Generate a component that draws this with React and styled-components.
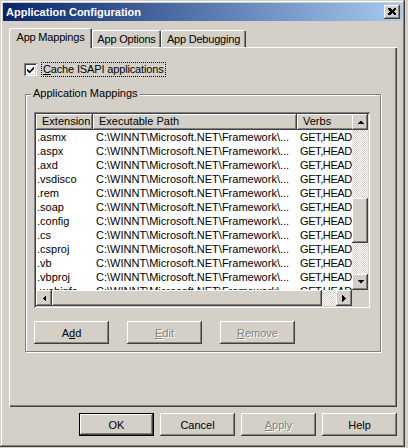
import React from 'react'
import styled, { createGlobalStyle } from 'styled-components'

const GlobalStyle = createGlobalStyle`
  body {
    margin: 0;
    background: #d4d0c8;
    font-family: "Liberation Sans", Arial, sans-serif;
    font-size: 11px;
    color: #000;
  }
  * { box-sizing: border-box; }
`

const raised = `box-shadow: inset -1px -1px #404040, inset 1px 1px #fff, inset -2px -2px #808080, inset 2px 2px #d4d0c8;`
const sunken = `box-shadow: inset 1px 1px #808080, inset -1px -1px #fff, inset 2px 2px #404040, inset -2px -2px #d4d0c8;`

const Window = styled.div`
  width: 405px;
  height: 447px;
  padding: 3px;
  background: #d4d0c8;
  box-shadow: inset -1px -1px #404040, inset 1px 1px #d4d0c8, inset -2px -2px #808080, inset 2px 2px #fff;
  display: flex;
  flex-direction: column;
`

const TitleBar = styled.div`
  height: 18px;
  display: flex;
  align-items: center;
  padding: 0 2px 0 3px;
  background: linear-gradient(to right, #0a246a, #a6caf0);
`

const TitleText = styled.div`
  flex: 1;
  color: #fff;
  font-weight: bold;
  font-size: 11px;
`

const CloseBtn = styled.div`
  width: 16px;
  height: 14px;
  background: #d4d0c8;
  ${raised}
  display: flex;
  align-items: center;
  justify-content: center;
  padding-bottom: 1px;
`

const Body = styled.div`
  padding: 7px 5px 0 6px;
  display: flex;
  flex-direction: column;
`

const TabRow = styled.div`
  height: 19px;
  display: flex;
  align-items: flex-end;
`

const Tab = styled.div`
  width: ${p => p.$w}px;
  height: ${p => (p.$active ? 20 : 17)}px;
  margin-bottom: ${p => (p.$active ? -1 : 0)}px;
  position: relative;
  z-index: ${p => (p.$active ? 2 : 0)};
  background: #d4d0c8;
  border-radius: 2px 2px 0 0;
  box-shadow: inset 1px 1px #fff, inset -1px 0 #404040, inset -2px 0 #808080;
  display: flex;
  align-items: center;
  justify-content: center;
  padding-bottom: ${p => (p.$active ? 2 : 0)}px;
  white-space: nowrap;
  letter-spacing: -0.2px;
`

const Panel = styled.div`
  height: 360px;
  position: relative;
  z-index: 1;
  box-shadow: inset 1px 1px #fff, inset -1px -1px #404040, inset -2px -2px #808080;
  padding: 15px 16px 0 15px;
  display: flex;
  flex-direction: column;
`

const CheckRow = styled.div`
  height: 15px;
  display: flex;
  align-items: center;
  gap: 4px;
`

const CheckBox = styled.div`
  width: 13px;
  height: 13px;
  background: #fff;
  ${sunken}
  display: flex;
  align-items: center;
  justify-content: center;
`

const FocusLabel = styled.span`
  border: 1px dotted #000;
  padding: 0 1px;
  line-height: 13px;
  white-space: nowrap;
  letter-spacing: -0.15px;
`

const Group = styled.div`
  position: relative;
  margin: 17px 0 0 1px;
  height: 258px;
  border: 1px solid #808080;
  box-shadow: inset 1px 1px #fff, 1px 1px #fff;
  padding: 17px 10px 0 8px;
  display: flex;
  flex-direction: column;
`

const Legend = styled.span`
  position: absolute;
  top: -8px;
  left: 5px;
  padding: 0 2px;
  background: #d4d0c8;
  line-height: 13px;
`

const List = styled.div`
  width: 336px;
  height: 196px;
  padding: 2px;
  background: #fff;
  ${sunken}
  display: grid;
  grid-template-columns: 1fr 16px;
  grid-template-rows: 1fr 16px;
`

const Content = styled.div`
  overflow: hidden;
  background: #fff;
`

const Header = styled.div`
  display: flex;
  height: 16px;
`

const HeadCell = styled.div`
  flex: none;
  width: ${p => p.$w}px;
  height: 16px;
  padding-left: 6px;
  line-height: 15px;
  background: #d4d0c8;
  box-shadow: inset -1px -1px #404040, inset 1px 1px #fff, inset -2px -2px #808080;
  white-space: nowrap;
  overflow: hidden;
`

const Row = styled.div`
  display: flex;
  height: 14px;
  line-height: 14px;
`

const Cell = styled.div`
  flex: none;
  width: ${p => p.$w}px;
  padding-left: ${p => p.$pad}px;
  letter-spacing: ${p => p.$ls || 0}px;
  white-space: nowrap;
  overflow: hidden;
`

const VScroll = styled.div`
  display: flex;
  flex-direction: column;
`

const HScroll = styled.div`
  display: flex;
`

const Track = styled.div`
  flex: ${p => (p.$size ? 'none' : 1)};
  ${p => (p.$dir === 'v' ? `height: ${p.$size}px;` : `width: ${p.$size}px;`)}
  background: repeating-conic-gradient(#fff 0 25%, #d4d0c8 0 50%) 0 0 / 2px 2px;
`

const Thumb = styled.div`
  flex: none;
  ${p => (p.$dir === 'v' ? `height: ${p.$size}px;` : `width: ${p.$size}px;`)}
  background: #d4d0c8;
  ${raised}
`

const ScrollBtn = styled.div`
  flex: none;
  width: 16px;
  height: 16px;
  background: #d4d0c8;
  ${raised}
  display: flex;
  align-items: center;
  justify-content: center;
`

const Corner = styled.div`
  background: #d4d0c8;
`

const BtnRow = styled.div`
  display: flex;
  gap: ${p => p.$gap}px;
  margin-top: ${p => p.$top}px;
  justify-content: ${p => (p.$end ? 'flex-end' : 'flex-start')};
`

const Button = styled.div`
  width: 75px;
  height: 23px;
  background: #d4d0c8;
  ${p => (p.$default
    ? `border: 1px solid #000; box-shadow: inset -1px -1px #404040, inset 1px 1px #fff, inset -2px -2px #808080;`
    : raised)}
  display: flex;
  align-items: center;
  justify-content: center;
  color: ${p => (p.$disabled ? '#808080' : '#000')};
  text-shadow: ${p => (p.$disabled ? '1px 1px #fff' : 'none')};
`

const Arrow = ({ dir }) => {
  const pts = {
    up: '0,4 7,4 3.5,0.5',
    down: '0,0 7,0 3.5,3.5',
    left: '4,0 4,7 0.5,3.5',
    right: '0,0 0,7 3.5,3.5',
  }[dir]
  const v = dir === 'up' || dir === 'down'
  return (
    <svg width={v ? 7 : 4} height={v ? 4 : 7} shapeRendering="crispEdges">
      <polygon points={pts} fill="#000" />
    </svg>
  )
}

const exts = ['.asmx', '.aspx', '.axd', '.vsdisco', '.rem', '.soap', '.config', '.cs', '.csproj', '.vb', '.vbproj', '.webinfo']
const path = 'C:\\WINNT\\Microsoft.NET\\Framework\\...'

export default function App() {
  return (
    <>
      <GlobalStyle />
      <Window>
        <TitleBar>
          <TitleText>Application Configuration</TitleText>
          <CloseBtn>
            <svg width="8" height="7" shapeRendering="crispEdges">
              <path d="M0 0h2l2 2 2-2h2v1l-2 2.5 2 2.5v1h-2l-2-2-2 2h-2v-1l2-2.5-2-2.5z" fill="#000" />
            </svg>
          </CloseBtn>
        </TitleBar>
        <Body>
          <TabRow>
            <Tab $w={83} $active>App Mappings</Tab>
            <Tab $w={69}>App Options</Tab>
            <Tab $w={85}>App Debugging</Tab>
          </TabRow>
          <Panel>
            <CheckRow>
              <CheckBox>
                <svg width="7" height="7">
                  <polygon points="0,2.5 2.5,5 7,0.5 7,3 2.5,7.5 0,5" fill="#000" />
                </svg>
              </CheckBox>
              <FocusLabel><u>C</u>ache ISAPI applications</FocusLabel>
            </CheckRow>
            <Group>
              <Legend>Application Mappings</Legend>
              <List>
                <Content>
                  <Header>
                    <HeadCell $w={57}>Extension</HeadCell>
                    <HeadCell $w={204}>Executable Path</HeadCell>
                    <HeadCell $w={60}>Verbs</HeadCell>
                  </Header>
                  {exts.map(e => (
                    <Row key={e}>
                      <Cell $w={57} $pad={1}>{e}</Cell>
                      <Cell $w={204} $pad={3}>{path}</Cell>
                      <Cell $w={55} $pad={3} $ls={-0.4}>GET,HEAD</Cell>
                    </Row>
                  ))}
                </Content>
                <VScroll>
                  <ScrollBtn><Arrow dir="up" /></ScrollBtn>
                  <Track $dir="v" $size={68} />
                  <Thumb $dir="v" $size={45} />
                  <Track $dir="v" />
                  <ScrollBtn><Arrow dir="down" /></ScrollBtn>
                </VScroll>
                <HScroll>
                  <ScrollBtn><Arrow dir="left" /></ScrollBtn>
                  <Thumb $dir="h" $size={270} />
                  <Track $dir="h" />
                  <ScrollBtn><Arrow dir="right" /></ScrollBtn>
                </HScroll>
                <Corner />
              </List>
              <BtnRow $gap={18} $top={13}>
                <Button>A<u>d</u>d</Button>
                <Button $disabled><u>E</u>dit</Button>
                <Button $disabled><u>R</u>emove</Button>
              </BtnRow>
            </Group>
          </Panel>
          <BtnRow $gap={6} $top={6} $end>
            <Button $default>OK</Button>
            <Button>Cancel</Button>
            <Button $disabled><u>A</u>pply</Button>
            <Button>Help</Button>
          </BtnRow>
        </Body>
      </Window>
    </>
  )
}
